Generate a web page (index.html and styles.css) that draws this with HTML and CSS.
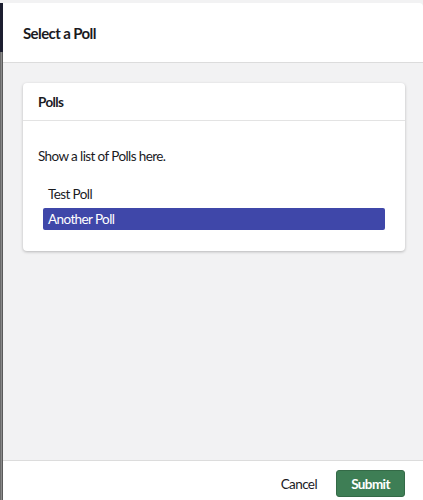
FILE: index.html
```html
<!DOCTYPE html>
<html>
<head>
<meta charset="utf-8">
<link rel="stylesheet" href="styles.css">
</head>
<body>
<div class="topbar"></div>
<div class="stage">
  <div class="backdrop">
    <div class="backdrop-nav"></div>
    <div class="backdrop-rest"></div>
  </div>
  <div class="modal">
    <header class="modal-header">
      <h1 class="modal-title">Select a Poll</h1>
    </header>
    <main class="modal-body">
      <section class="card">
        <div class="card-header">Polls</div>
        <div class="card-body">
          <p class="card-text">Show a list of Polls here.</p>
          <ul class="poll-list">
            <li class="poll-item">Test Poll</li>
            <li class="poll-item selected">Another Poll</li>
          </ul>
        </div>
      </section>
    </main>
    <footer class="modal-footer">
      <button class="btn btn-link">Cancel</button>
      <button class="btn btn-primary">Submit</button>
    </footer>
  </div>
</div>
</body>
</html>
```
FILE: styles.css
```css
* { box-sizing: border-box; }
html, body { margin: 0; padding: 0; height: 100%; }
body {
  font-family: Lato, "Open Sans", "Liberation Sans", sans-serif;
  background: #f2f2f3;
  display: flex;
  flex-direction: column;
  overflow: hidden;
  color: #1b1b1f;
  letter-spacing: -0.6px;
}
.topbar { height: 3px; flex: none; background: #f2f2f3; }
.stage { flex: 1; display: flex; min-height: 0; }
.backdrop { width: 3px; flex: none; display: flex; flex-direction: column; }
.backdrop-nav { height: 49px; background: #1c1e30; }
.backdrop-rest { flex: 1; background: linear-gradient(to right, #6b6b6b 0 1px, #8a8a8a 1px 2px, #5a5a5a 2px 3px); }
.modal {
  flex: 1;
  display: flex;
  flex-direction: column;
  background: #f2f2f3;
  border-top-right-radius: 4px;
  overflow: hidden;
  min-width: 0;
}
.modal-header {
  height: 60px;
  flex: none;
  background: #fff;
  border-bottom: 1px solid #dcdcdc;
  display: flex;
  align-items: center;
  padding: 0 20px;
}
.modal-title { margin: 0; font-size: 15px; font-weight: 700; color: #1b1b1f; }
.modal-body { flex: 1; padding: 20px 18px 20px 20px; }
.card {
  background: #fff;
  border-radius: 4px;
  box-shadow: 0 1px 3px rgba(0,0,0,0.25);
}
.card-header {
  height: 38px;
  display: flex;
  align-items: center;
  padding: 0 15px;
  font-size: 13.5px;
  font-weight: 700;
  border-bottom: 1px solid #e3e3e3;
}
.card-body { padding: 26px 20px 21px 15px; }
.card-text { margin: 0 0 18px; font-size: 13.5px; line-height: 18px; }
.poll-list { list-style: none; margin: 0; padding: 0 0 0 5px; }
.poll-item {
  font-size: 13.5px;
  height: 22px;
  line-height: 22px;
  padding: 0 5px;
  border-radius: 2px;
  margin-bottom: 3px;
}
.poll-item:last-child { margin-bottom: 0; }
.poll-item.selected { background: #3f47a9; color: #fff; }
.modal-footer {
  height: 40px;
  flex: none;
  background: #fff;
  border-top: 1px solid #dcdcdc;
  display: flex;
  align-items: flex-start;
  justify-content: flex-end;
  padding: 9px 18px 0 0;
  gap: 19px;
}
.btn { font-family: inherit; font-size: 13.5px; letter-spacing: -0.6px; border: none; cursor: pointer; }
.btn-link { background: none; color: #1b1b1f; padding: 0; height: 27px; }
.btn-primary {
  background: #3e7e55;
  color: #fff;
  font-weight: 700;
  width: 69px;
  height: 27px;
  border-radius: 3px;
  border: 1px solid #346a47;
}
```
